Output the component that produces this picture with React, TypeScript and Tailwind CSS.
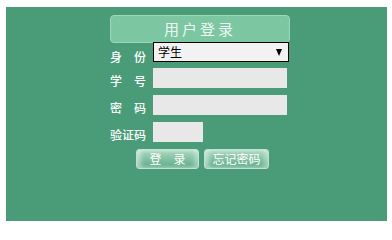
export default function App() {
  const labelCls = 'w-[43px] shrink-0 text-[12px] leading-[12px] font-medium text-white';
  const btnCls =
    'h-[20px] rounded-[3px] border border-[#bfe3d0] bg-gradient-to-b from-[#a8d8bf] to-[#5eaa86] shadow-[inset_4px_0_4px_rgba(255,255,255,0.45),inset_-4px_0_4px_rgba(255,255,255,0.35)] text-[12px] leading-[12px] text-white';
  return (
    <div className="w-[392px] h-[229px] bg-white pt-[7px] pl-[6px]" style={{ fontFamily: '"Noto Sans CJK SC", "Noto Sans", sans-serif' }}>
      <div className="w-[381px] h-[214px] bg-[#4a9c78] pt-[8px]">
        <div className="ml-[104px] w-[180px] flex flex-col">
          {/* 标题 */}
          <div className="h-[28px] rounded-[4px] border border-[#9fd6bb] bg-[#7cc6a2] flex items-center justify-center text-[15px] tracking-[3px] text-[#eef8f2]">
            用户登录
          </div>

          <div className="flex items-center h-[20px] -mt-[1px]">
            <span className={labelCls + ' pt-[10px]'}>身　份</span>
            <div className="w-[136px] h-[20px] border border-black bg-[#f2f2f2] flex items-center justify-between pl-[4px] pr-[6px] text-[12px] text-black">
              <span>学生</span>
              <span className="w-0 h-0 border-l-[3.5px] border-r-[3.5px] border-t-[7px] border-l-transparent border-r-transparent border-t-black" />
            </div>
          </div>

          <div className="flex items-center h-[20px] mt-[6px]">
            <span className={labelCls + ' pt-[6px]'}>学　号</span>
            <div className="w-[134px] h-[20px] bg-[#e8e8e8]" />
          </div>

          <div className="flex items-center h-[20px] mt-[7px]">
            <span className={labelCls + ' pt-[6px]'}>密　码</span>
            <div className="w-[134px] h-[20px] bg-[#e8e8e8]" />
          </div>

          <div className="flex items-center h-[20px] mt-[7px]">
            <span className={labelCls + ' pt-[5px]'}>验证码</span>
            <div className="w-[50px] h-[20px] bg-[#e8e8e8]" />
          </div>

          <div className="flex gap-[5px] mt-[7px] ml-[26px]">
            <button className={btnCls + ' w-[63px]'}>登　录</button>
            <button className={btnCls + ' w-[65px]'}>忘记密码</button>
          </div>
        </div>
      </div>
    </div>
  );
}
